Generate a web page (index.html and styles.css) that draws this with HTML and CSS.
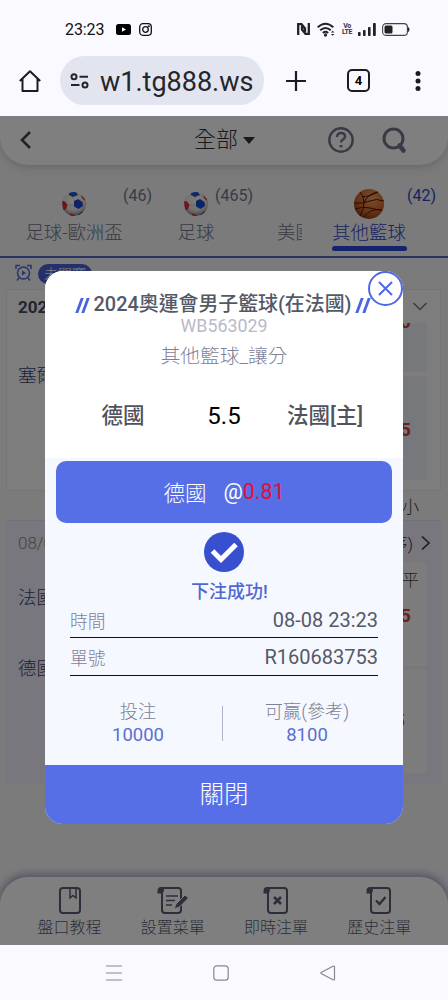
FILE: index.html
```html
<!DOCTYPE html>
<html lang="zh-Hant">
<head>
<meta charset="utf-8">
<meta name="viewport" content="width=device-width, initial-scale=1">
<title>下注成功</title>
<link rel="stylesheet" href="styles.css">
</head>
<body>
<svg class="defs" width="0" height="0">
  <defs>
    <radialGradient id="leather" cx="0.6" cy="0.3" r="0.8"><stop offset="0" stop-color="#f2a05c"/><stop offset="0.6" stop-color="#d0662a"/><stop offset="1" stop-color="#7a2c0c"/></radialGradient>
    <radialGradient id="shell" cx="0.5" cy="0.35" r="0.7"><stop offset="0" stop-color="#fff"/><stop offset="0.6" stop-color="#e8e4de"/><stop offset="1" stop-color="#77706c"/></radialGradient>
    <clipPath id="round"><circle cx="12" cy="12" r="12"/></clipPath>
    <symbol id="soccer" viewBox="0 0 24 24">
      <g clip-path="url(#round)">
        <circle cx="12" cy="12" r="12" fill="url(#shell)"/>
        <path d="M7 0H14L16 3L11 5L7 3Z" fill="#2450d0"/>
        <path d="M12 9L16 7L20.500 10L21 14L16.500 17L12 14.500Z" fill="#1c48d0"/>
        <path d="M0 9L3 9.500L5.500 13L4 17.500L1 18Z" fill="#d92b35"/>
        <path d="M19 3L23 7V9L20 6Z" fill="#d92b35"/>
        <path d="M8 21.500L12 22.500L13 24H8Z" fill="#d92b35"/>
        <path d="M16 23L20 19.500H22L20 24Z" fill="#2450d0"/>
        <path d="M5.500 13H12M10 5L13 9" stroke="#c0bbb6" stroke-width=".6" fill="none"/>
      </g>
    </symbol>
    <symbol id="scroll" viewBox="0 0 26 28">
      <path d="M4 2h17q3 0 3 3v19q0 3-3 3H8q-3 0-3-3V5" fill="none" stroke="currentColor" stroke-width="2"/>
      <path d="M5.500 7.500H.5V5q0-4 3.500-4 3 0 3 4z" fill="currentColor"/>
    </symbol>
  </defs>
</svg>
<div class="phone">
  <div class="status">
    <span class="clock">23:23</span>
    <svg class="yt" width="15" height="11" viewBox="0 0 15 11"><rect width="15" height="11" rx="2.500"/><path d="M6 3.200v4.600l4-2.300z" fill="#fff"/></svg>
    <svg class="ig" width="13" height="13" viewBox="0 0 13 13" fill="none" stroke="#111" stroke-width="1.300"><rect x=".7" y=".7" width="11.600" height="11.600" rx="3.200"/><circle cx="6.500" cy="6.500" r="2.800"/><circle cx="9.800" cy="3.200" r=".4"/></svg>
    <svg class="nfc" width="13" height="12" viewBox="0 0 13 12"><path d="M1.200 12V1.200h3.300L8 5.500V9M11.800 0v10.800H8.500L5 6.500V3" fill="none" stroke="#222" stroke-width="2.300"/></svg>
    <svg class="wifi" width="19" height="15" viewBox="0 0 19 15" fill="none" stroke="#222" stroke-width="1.900"><path d="M.7 5.200q7.800-7 15.600 0M3.200 8.200q5.300-4.600 10.600 0M5.800 10.900q2.700-2.200 5.400 0"/><circle cx="8.500" cy="13" r=".7"/><path d="M14 10.500h3.400l-1.700-1.700zM14 12h3.400l-1.700 1.700z" stroke="none" fill="#222"/></svg>
    <span class="volte"><span>Vo</span><span>LTE</span></span>
    <svg class="bars" width="19" height="13" viewBox="0 0 19 13" fill="#222"><rect y="9" width="2.600" height="4" rx=".8"/><rect x="5" y="7" width="2.600" height="6" rx=".8"/><rect x="10" y="4" width="2.600" height="9" rx=".8"/><rect x="15" width="2.800" height="13" rx=".8"/></svg>
    <svg class="battery" width="28" height="13" viewBox="0 0 28 13"><rect x=".6" y=".6" width="24.800" height="11.800" rx="3.500" fill="none" stroke="#444" stroke-width="1.100"/><rect x="2.500" y="2.500" width="8" height="8" rx="1.500" fill="#222"/><path d="M26.300 4.500q1.500 2 0 4z" fill="#222" stroke="#222"/></svg>
  </div>
  <div class="browser">
    <svg class="home" width="22" height="22" viewBox="0 0 22 22" fill="none" stroke="#1b1c20" stroke-width="2"><path d="M.8 11L11 1.300 21.200 11M3.500 9v12h15V9" stroke-linejoin="round"/></svg>
    <div class="url">
      <svg width="19" height="16" viewBox="0 0 19 16" fill="none" stroke="#25262b" stroke-width="2"><circle cx="4" cy="3.700" r="2.500"/><path d="M9.500 3.700H18M1 12h8.500"/><circle cx="15" cy="12" r="2.500"/></svg>
      <span>w1.tg888.ws</span>
    </div>
    <svg class="plus" width="20" height="20" viewBox="0 0 20 20" stroke="#1b1c20" stroke-width="2.200"><path d="M10 0v20M0 10h20"/></svg>
    <span class="count-box">4</span>
    <svg class="more" width="6" height="20" viewBox="0 0 6 20" fill="#1b1c20"><circle cx="3" cy="2.500" r="2.500"/><circle cx="3" cy="10" r="2.500"/><circle cx="3" cy="17.500" r="2.500"/></svg>
  </div>

  <div class="viewport">
    <div class="app">
      <div class="topbar">
        <svg class="back" width="11" height="18" viewBox="0 0 11 18" fill="none" stroke="#444" stroke-width="2.600"><path d="M10 1L2 9l8 8"/></svg>
        <span class="all"><span>全部</span><i class="caret"></i></span>
        <svg class="help" width="26" height="26" viewBox="0 0 26 26" fill="none" stroke="#72758c" stroke-width="2.400"><circle cx="13" cy="13" r="11.700"/><path d="M9 10q0-4 4-4t4 3.500q0 2-2 3t-2 3"/><path d="M13 18v2.400" stroke-width="2.800"/></svg>
        <svg class="search" width="25" height="27" viewBox="0 0 25 27" fill="none" stroke="#72758c" stroke-width="3"><circle cx="11.500" cy="11.500" r="9.500"/><path d="M17.500 18.500l4 5" stroke-width="4.500" stroke-linecap="round"/></svg>
      </div>
      <div class="tabs">
        <div class="tab tab-a"><svg class="ball" width="24" height="24"><use href="#soccer"/></svg><span class="num">(46)</span><span class="name">足球-歐洲盃</span></div>
        <div class="tab tab-b"><svg class="ball" width="24" height="24"><use href="#soccer"/></svg><span class="num">(465)</span><span class="name">足球</span></div>
        <div class="tab tab-c"><span class="ball"></span><span class="name">美國</span></div>
        <div class="tab tab-d"><svg class="ball" width="30" height="30" viewBox="0 0 30 30"><circle cx="15" cy="15" r="15" fill="url(#leather)"/><path d="M6 3q4 4 4 11T6 27M0 14q10 1 16-2t14 0M1 20q8-3 15-1t12 2M8 8Q15 8 24 3M10 28q7-9 17-7M10 14Q13 5 24 3" fill="none" stroke="#4a1a08" stroke-width="1"/></svg><span class="num">(42)</span><span class="name">其他籃球</span><i class="bar"></i></div>
      </div>
      <div class="filter">
        <svg width="17" height="17" viewBox="0 0 17 17" fill="none" stroke="#5068d8" stroke-width="1.500"><circle cx="8.500" cy="9" r="6"/><path d="M1 5V1.500h4M16 5V1.500h-4M4 14l-2 2.500M13 14l2 2.500"/><path d="M7 6.500v5l4-2.500z" fill="#5068d8" stroke="none"/></svg>
        <span class="pill">未開賽</span>
      </div>
      <div class="card">
        <div class="card-head"><b>2024</b><svg width="14" height="9" viewBox="0 0 14 9" fill="none" stroke="#777" stroke-width="1.500"><path d="M.5 1L7 7.500 13.500 1"/></svg></div>
        <div class="card-body">
          <span class="team">塞爾</span>
          <div class="cells"><div class="cell cell-s"><span class="odd">0</span></div><div class="cell cell-l"><span class="odd">5</span></div></div>
        </div>
      </div>
      <div class="colhead">大小</div>
      <div class="match">
        <div class="match-head"><span>08/08</span><span class="order">順序)<svg width="9" height="14" viewBox="0 0 9 14" fill="none" stroke="#444" stroke-width="1.700"><path d="M1 .5L8 7l-7 6.500"/></svg></span></div>
        <div class="match-body">
          <div class="teams"><span>法國</span><span>德國</span></div>
          <div class="cells"><div class="cell white"><span class="draw">平</span><span class="odd">5</span></div><div class="cell white last"><span class="odd">5</span></div></div>
        </div>
      </div>
      <div class="tabbar">
        <div class="item"><svg width="26" height="28" viewBox="0 0 26 28" fill="none" stroke="currentColor" stroke-width="2"><rect x="3" y="2" width="20" height="25" rx="3"/><path d="M13 2v10l3-2.500 3 2.500V2" stroke-width="1.500"/></svg><span>盤口教程</span></div>
        <div class="item"><svg width="32" height="28" viewBox="0 0 32 28"><use href="#scroll" width="26" height="28"/><path d="M9 10h12M9 14.500h9M9 19h6" stroke="currentColor" stroke-width="1.600"/><path d="M17 23l2-5 9-9 3.500 3-9 9z" fill="currentColor" stroke="#fff"/></svg><span>設置菜單</span></div>
        <div class="item"><svg width="26" height="28" viewBox="0 0 26 28"><use href="#scroll"/><path d="M11 11l7 7M18 11l-7 7" stroke="currentColor" stroke-width="2.600"/></svg><span>即時注單</span></div>
        <div class="item"><svg width="26" height="28" viewBox="0 0 26 28"><use href="#scroll"/><path d="M10 14.500l3.500 3.500 6-7" fill="none" stroke="currentColor" stroke-width="2.400"/></svg><span>歷史注單</span></div>
      </div>
    </div>

    <div class="overlay">
      <div class="modal">
        <button class="close"><svg width="35" height="35" viewBox="0 0 35 35" fill="#fff" stroke="#5068e4" stroke-width="2"><circle cx="17.500" cy="17.500" r="16.500"/><path d="M11 11l13 13M24 11L11 24"/></svg></button>
        <div class="summary">
          <div class="title"><i></i><i></i><span>2024奧運會男子籃球(在法國)</span><i></i><i></i></div>
          <div class="code">WB563029</div>
          <div class="kind">其他籃球_讓分</div>
          <div class="versus"><span>德國</span><span class="line">5.5</span><span>法國[主]</span></div>
        </div>
        <div class="pick"><span>德國</span><span>@<em>0.81</em></span></div>
        <svg class="ok" width="40" height="40" viewBox="0 0 40 40"><circle cx="20" cy="20" r="20" fill="#3850d0"/><path d="M8.500 19l8.500 8.500L32 12.500" fill="none" stroke="#fff" stroke-width="5"/></svg>
        <div class="success">下注成功!</div>
        <div class="rows">
          <div class="row"><span>時間</span><b>08-08 23:23</b></div>
          <div class="row"><span>單號</span><b>R160683753</b></div>
        </div>
        <div class="stakes">
          <div class="stake"><span>投注</span><b>10000</b></div>
          <div class="rule"></div>
          <div class="stake"><span>可贏(參考)</span><b>8100</b></div>
        </div>
        <div class="dismiss">關閉</div>
      </div>
    </div>
  </div>

  <div class="sysnav">
    <svg width="16" height="16" viewBox="0 0 16 16" stroke="#888" stroke-width="1.200"><path d="M0 1h16M0 8h16M0 15h16"/></svg>
    <svg width="16" height="16" viewBox="0 0 16 16" fill="none" stroke="#888" stroke-width="1.200"><rect x=".8" y=".8" width="14.400" height="14.400" rx="3"/></svg>
    <svg width="16" height="16" viewBox="0 0 16 16" fill="none" stroke="#888" stroke-width="1.200" stroke-linejoin="round"><path d="M1.500 7.200L13 1.300q1.500-.5 1.500 1v11.400q0 1.500-1.500 1L1.500 8.800q-1.300-.8 0-1.600z"/></svg>
  </div>
</div>
</body>
</html>
```
FILE: styles.css
```css
* { box-sizing: border-box; }
body { margin: 0; font-family: Roboto, "Noto Sans CJK TC", sans-serif; font-weight: 300; }
.defs { position: absolute; }
.phone { width: 448px; height: 1000px; display: flex; flex-direction: column; background: #faf9ff; overflow: hidden; }

.status { height: 46px; padding: 12px 38px 0 65px; display: flex; align-items: center; }
.clock { font-size: 16px; font-weight: 400; color: #111; width: 39px; letter-spacing: -.1px; }
.yt { margin-left: 12px; }
.ig { margin-left: 8px; }
.nfc { margin-left: auto; }
.wifi { margin-left: 7px; }
.volte { margin-left: 6px; width: 10px; display: flex; flex-direction: column; align-items: center; font: 700 7px/6.500px Roboto, sans-serif; color: #333; letter-spacing: -.4px; }
.bars { margin-left: 6px; }
.battery { margin-left: 5px; }

.browser { height: 70px; display: flex; align-items: center; padding: 0 27px 1px 19px; }
.url { margin-left: 19px; width: 204px; height: 49px; border-radius: 25px; background: #e2e4ef; display: flex; align-items: center; padding-left: 10px; gap: 11px; font-size: 27px; font-weight: 400; color: #25262b; }
.url span { padding-top: 2px; }
.plus { margin-left: 22px; }
.count-box { margin-left: 41px; width: 23px; height: 23px; border: 2px solid #1b1c20; border-radius: 5px; font: 700 13px/20px Roboto, sans-serif; text-align: center; }
.more { margin-left: auto; }

.viewport { position: relative; height: 829px; overflow: hidden; }
.app { height: 829px; background: #f6f6f6; display: flex; flex-direction: column; }
.topbar { height: 49px; flex: none; background: #fff; border-radius: 0 0 28px 28px; box-shadow: 0 2px 8px #ccc; display: flex; align-items: center; padding: 0 41px 1px 20px; }
.all { margin-left: 163px; font-size: 22px; line-height: 32px; color: #333; display: flex; align-items: center; gap: 5px; }
.all span { margin-top: -1px; }
.caret { border: 6px solid transparent; border-top: 7px solid #333; border-bottom: 0; }
.help { margin-left: auto; }
.search { margin-left: 28px; }

.tabs { height: 93px; flex: none; border-bottom: 2px solid #5068c8; display: flex; padding: 24px 0 0 25px; color: #72758c; }
.tab { position: relative; height: 62px; display: flex; flex-direction: column; align-items: center; }
.ball { display: block; margin: 3px 0; height: 24px; flex: none; }
.name { font-size: 18.400px; line-height: 28px; white-space: nowrap; }
.num { position: absolute; top: -3px; left: 100%; font-size: 16px; line-height: 20px; font-weight: 400; }
.tab-a { width: 98px; }
.tab-b { width: 36px; margin-left: 55px; }
.tab-b .num { left: 37px; }
.tab-c { width: 25px; margin-left: 63px; overflow: hidden; align-items: flex-start; }
.tab-d { width: 74px; margin-left: 30px; color: #2f45c8; }
.tab-d .ball { height: 30px; margin: 0; }
.bar { width: 75px; height: 5px; border-radius: 3px; background: #2f45d8; margin-top: -1px; }
.tab-d .num { left: 75px; }

.filter { height: 31px; flex: none; display: flex; padding: 6px 15px 0; gap: 6px; }
.pill { width: 54px; height: 20px; border-radius: 10px; background: #4861d8; color: #fff; font-size: 14px; line-height: 20px; text-align: center; }

.card { margin: 0 7px 0 6px; height: 202px; flex: none; background: #fafafa; border: 1px solid #ebebef; padding: 0 13px 0 11px; }
.card-head { height: 33px; display: flex; justify-content: space-between; align-items: center; font-size: 17px; color: #444a60; }
.card-head b { font-weight: 700; }
.card-body { display: flex; justify-content: space-between; }
.team { margin-top: 39px; font-size: 18.500px; line-height: 28px; color: #3c4070; }
.cells { width: 60px; display: flex; flex-direction: column; gap: 4px; }
.cell { background: #eff0f6; padding-right: 16px; text-align: right; overflow: hidden; }
.cell-s { height: 49px; }
.cell-s .odd { display: block; margin-top: -11px; }
.cell-l { height: 104px; padding-top: 44px; }
.odd { font-size: 19px; line-height: 20px; font-weight: 700; color: #d84040; }
.colhead { margin: 0 7px 0 6px; height: 30px; flex: none; background: #f7f7f9; border-bottom: 1px solid #dfe3f4; padding-right: 22px; text-align: right; font-size: 17px; line-height: 32px; color: #444; }
.match { margin: 0 7px 0 6px; height: 263px; flex: none; background: #eeeefb; padding: 0 14px 0 12px; }
.match-head { height: 41px; display: flex; align-items: center; justify-content: space-between; padding-top: 2px; font-size: 17px; color: #888; margin-right: -3px; }
.order { display: flex; align-items: center; gap: 8px; color: #333; }
.match-body { display: flex; justify-content: space-between; }
.match .cells { gap: 3px; }
.teams { padding-top: 22px; display: flex; flex-direction: column; gap: 43px; font-size: 18.500px; line-height: 28px; color: #3c4070; }
.white { background: #f8f8f8; height: 104px; display: flex; flex-direction: column; align-items: flex-end; }
.draw { font-size: 17px; line-height: 36px; margin-right: -8px; color: #444; }
.white .odd { margin-top: 8px; }
.last { padding-right: 22px; }
.last .odd { margin-top: 42px; }

.tabbar { margin-top: auto; height: 68px; flex: none; background: #fff; border-radius: 28px 28px 0 0; box-shadow: 0 -2px 6px 2px #b4b4d4; display: flex; padding: 9px 17px 0 18px; color: #5a5c74; }
.item { flex: 1; display: flex; flex-direction: column; align-items: center; font-size: 16px; line-height: 27px; }
.item svg { flex: none; }

.overlay { position: absolute; inset: 0; background: rgba(0, 0, 0, .5); padding: 155px 0 0 45px; }
.modal { position: relative; width: 358px; height: 553px; border-radius: 18px; background: #f5f8ff; display: flex; flex-direction: column; }
.close { position: absolute; right: 0; top: 0; padding: 0; border: 0; background: none; display: flex; }
.summary { height: 187px; flex: none; background: #fff; border-radius: 18px 18px 0 0; padding-top: 22px; text-align: center; }
.title { height: 24px; line-height: 24px; padding-right: 3px; display: flex; justify-content: center; align-items: center; font-size: 19.900px; font-weight: 500; color: #555966; white-space: nowrap; }
.title i { width: 2.500px; height: 15px; background: #4c64e0; transform: skewX(-20deg); margin: 0 2px; }
.title span { margin: 0 5px; }
.code { font-size: 17.800px; line-height: 18px; color: #b8b9c9; font-weight: 400; }
.kind { font-size: 19.700px; line-height: 36px; margin-top: 4px; color: #7f8198; }
.versus { display: grid; grid-template-columns: 156px 46px 156px; margin-top: 25px; font-size: 21.500px; line-height: 32px; font-weight: 500; color: #50535f; }
.line { font-size: 24px; font-weight: 400; color: #000; }
.pick { margin: 3px 11px 0; height: 62px; flex: none; border-radius: 10px; background: #566ee6; color: #fff; display: flex; align-items: center; justify-content: center; gap: 17px; font-size: 21.500px; padding-bottom: 2px; }
.pick span { font-weight: 300; }
.pick span + span { font-weight: 400; }
.pick em { font-style: normal; color: #e01038; }
.ok { margin: 9px auto 0; flex: none; }
.success { margin-top: 6px; padding-left: 11px; text-align: center; font-size: 18px; line-height: 28px; font-weight: 500; color: #5068d0; }
.rows { padding: 0 25px; }
.row { height: 37px; border-bottom: 1.500px solid #111; display: flex; justify-content: space-between; align-items: center; font-size: 17.700px; color: #7f8198; }
.row:first-child { height: 32px; padding-bottom: 3px; }
.row + .row { height: 38px; padding-top: 1px; }
.row b { font-size: 20px; font-weight: 400; color: #565966; }
.stakes { margin-top: 24px; display: grid; grid-template-columns: 1fr 1px 1fr; padding: 0 12px 0 9px; text-align: center; }
.stake { display: flex; flex-direction: column; font-size: 18.200px; line-height: 24px; color: #7f8198; }
.stake b { font-size: 18.500px; line-height: 22px; font-weight: 400; color: #5b6fce; }
.rule { height: 35px; margin-top: 6px; background: #b0b2c8; }
.dismiss { margin-top: auto; height: 59px; background: #566ee6; border-radius: 0 0 18px 18px; color: #fff; text-align: center; font-size: 24.500px; line-height: 60px; }

.sysnav { height: 55px; flex: none; display: flex; align-items: center; justify-content: center; gap: 91px; padding-right: 7px; }
```
